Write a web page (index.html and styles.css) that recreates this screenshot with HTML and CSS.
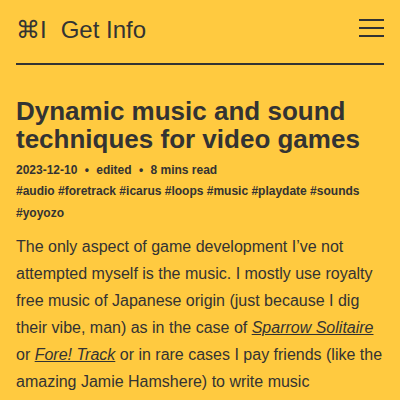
FILE: index.html
```html
<!DOCTYPE html>
<html>
<head>
<meta charset="utf-8">
<link rel="stylesheet" href="styles.css">
</head>
<body>
<header class="top">
  <div class="brand"><span class="cmd">⌘I</span><span class="name">Get Info</span></div>
  <button class="menu" aria-label="menu"><span></span><span></span><span></span></button>
</header>
<main class="post">
  <h1 class="title">Dynamic music and sound techniques for video games</h1>
  <div class="meta">2023-12-10 <span class="dot">•</span> edited <span class="dot">•</span> 8 mins read</div>
  <div class="tags">#audio #foretrack #icarus #loops #music #playdate #sounds #yoyozo</div>
  <p class="body">The only aspect of game development I’ve not attempted myself is the music. I mostly use royalty free music of Japanese origin (just because I dig their vibe, man) as in the case of <a href="#">Sparrow Solitaire</a> or <a href="#">Fore! Track</a> or in rare cases I pay friends (like the amazing Jamie Hamshere) to write music specifically for a game.</p>
</main>
</body>
</html>
```
FILE: styles.css
```css
html, body { margin: 0; padding: 0; }
body {
  background: #ffca40;
  color: #333333;
  font-family: "Liberation Sans", Arial, sans-serif;
  width: 400px;
  height: 400px;
  overflow: hidden;
}
.top {
  margin: 0 16px;
  height: 63px;
  border-bottom: 2px solid #333333;
  display: flex;
  align-items: flex-start;
  justify-content: space-between;
}
.brand {
  font-size: 24px;
  line-height: 28px;
  padding-top: 16px;
  display: flex;
}
.cmd { margin-right: 14px; }
.menu {
  border: 0;
  background: none;
  padding: 0;
  margin-top: 19px;
  width: 25px;
  display: flex;
  flex-direction: column;
  gap: 6px;
}
.menu span {
  display: block;
  width: 25px;
  height: 2px;
  background: #333333;
}
.post { padding: 0 16px; }
.title {
  margin: 32px 0 0;
  font-size: 26px;
  line-height: 28px;
  font-weight: bold;
}
.meta {
  margin-top: 7px;
  font-size: 12px;
  font-weight: bold;
  line-height: 20px;
}
.dot { margin: 0 4px; }
.tags {
  font-size: 12px;
  font-weight: bold;
  line-height: 22px;
}
.body {
  margin: 9px 0 0;
  font-size: 16px;
  line-height: 27px;
}
.body a { color: inherit; font-style: italic; text-decoration: underline; }
```
